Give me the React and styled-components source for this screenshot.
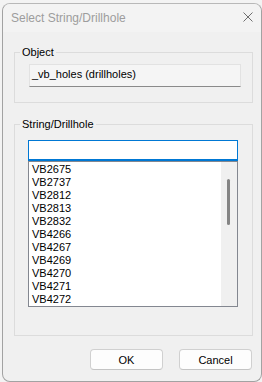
import React from 'react';
import styled, { createGlobalStyle } from 'styled-components';

const Global = createGlobalStyle`
  html, body { margin: 0; padding: 0; background: #f3f3f3; }
  body { font-family: "Liberation Sans", Arial, sans-serif; }
  #root { width: 262px; height: 382px; overflow: hidden; }
`;

const Page = styled.div`
  box-sizing: border-box;
  width: 262px;
  height: 382px;
  padding: 3px 0 0 2px;
`;

const Window = styled.div`
  box-sizing: border-box;
  width: 260px;
  height: 379px;
  border: 1px solid #a2a2a2;
  border-top-color: #b8b8b8;
  border-radius: 8px;
  background: #f0f0f0;
  display: flex;
  flex-direction: column;
  overflow: hidden;
`;

const TitleBar = styled.div`
  height: 28px;
  flex: none;
  background: #f3f3f3;
  display: flex;
  align-items: center;
  justify-content: space-between;
  padding: 0 8px 0 8px;
`;

const Title = styled.span`
  font-size: 12px;
  color: #9d9d9d;
`;

const CloseIcon = styled.svg`
  width: 10px;
  height: 10px;
  margin-top: -2px;
  display: block;
`;

const Body = styled.div`
  flex: 1;
  display: flex;
  flex-direction: column;
  padding: 13px 8px 11px 11px;
`;

const Group = styled.fieldset`
  margin: ${p => p.$top}px 0 0 0;
  padding: 0;
  min-inline-size: 0;
  border: 1px solid #dcdcdc;
`;

const Legend = styled.legend`
  margin-left: 5px;
  padding: 0 2px;
  font-size: 11px;
  line-height: 14px;
  color: #000;
`;

const GroupInner = styled.div`
  display: flex;
  flex-direction: column;
  padding: ${p => p.$pad};
`;

const ReadField = styled.div`
  box-sizing: border-box;
  height: 23px;
  border: 1px solid #e2e2e2;
  border-bottom-color: #8a8a8a;
  background: #f5f5f5;
  font-size: 11px;
  line-height: 18px;
  padding: 0 2px 3px 2px;
  color: #000;
  white-space: nowrap;
`;

const FilterInput = styled.input`
  box-sizing: border-box;
  height: 21px;
  width: 100%;
  margin: 0;
  border: 1px solid #0078d4;
  border-bottom-width: 2px;
  background: #fff;
  outline: none;
  padding: 0 3px;
  font-family: "Liberation Sans", Arial, sans-serif;
  font-size: 11px;
`;

const ListBox = styled.div`
  box-sizing: border-box;
  height: 146px;
  border: 1px solid #838790;
  background: #fff;
  display: grid;
  grid-template-columns: 1fr 16px;
  overflow: hidden;
`;

const Items = styled.div`
  padding: 1px 0 0 3px;
  overflow: hidden;
`;

const Item = styled.div`
  font-size: 11px;
  line-height: 13px;
  height: 13px;
  color: #000;
  white-space: nowrap;
`;

const Track = styled.div`
  background: #f0f0f0;
  padding-top: 17px;
`;

const Thumb = styled.div`
  width: 3px;
  height: 46px;
  margin-left: 6px;
  border-radius: 2px;
  background: #858585;
`;

const ButtonRow = styled.div`
  display: flex;
  justify-content: flex-end;
  gap: 16px;
  margin: 13px 1px 0 0;
`;

const Button = styled.button`
  box-sizing: border-box;
  width: 73px;
  height: 21px;
  margin: 0;
  padding: 0;
  border: 1px solid #d0d0d0;
  border-bottom-color: #c4c4c4;
  border-radius: 4px;
  background: #fdfdfd;
  font-family: "Liberation Sans", Arial, sans-serif;
  font-size: 11px;
  color: #000;
`;

const items = [
  'VB2675', 'VB2737', 'VB2812', 'VB2813', 'VB2832', 'VB4266',
  'VB4267', 'VB4269', 'VB4270', 'VB4271', 'VB4272',
];

export default function App() {
  return (
    <>
      <Global />
      <Page>
        <Window>
          <TitleBar>
            <Title>Select String/Drillhole</Title>
            <CloseIcon viewBox="0 0 10 10">
              <path d="M0.5 0.5 L9.5 9.5 M9.5 0.5 L0.5 9.5" stroke="#6e6e6e" strokeWidth="1" fill="none" />
            </CloseIcon>
          </TitleBar>
          <Body>
            <Group $top={0}>
              <Legend>Object</Legend>
              <GroupInner $pad="5px 11px 15px 14px">
                <ReadField>_vb_holes (drillholes)</ReadField>
              </GroupInner>
            </Group>
            <Group $top={14}>
              <Legend>String/Drillhole</Legend>
              <GroupInner $pad="9px 14px 28px 13px">
                <FilterInput defaultValue="" />
                <ListBox>
                  <Items>
                    {items.map(i => <Item key={i}>{i}</Item>)}
                  </Items>
                  <Track><Thumb /></Track>
                </ListBox>
              </GroupInner>
            </Group>
            <ButtonRow>
              <Button>OK</Button>
              <Button>Cancel</Button>
            </ButtonRow>
          </Body>
        </Window>
      </Page>
    </>
  );
}
